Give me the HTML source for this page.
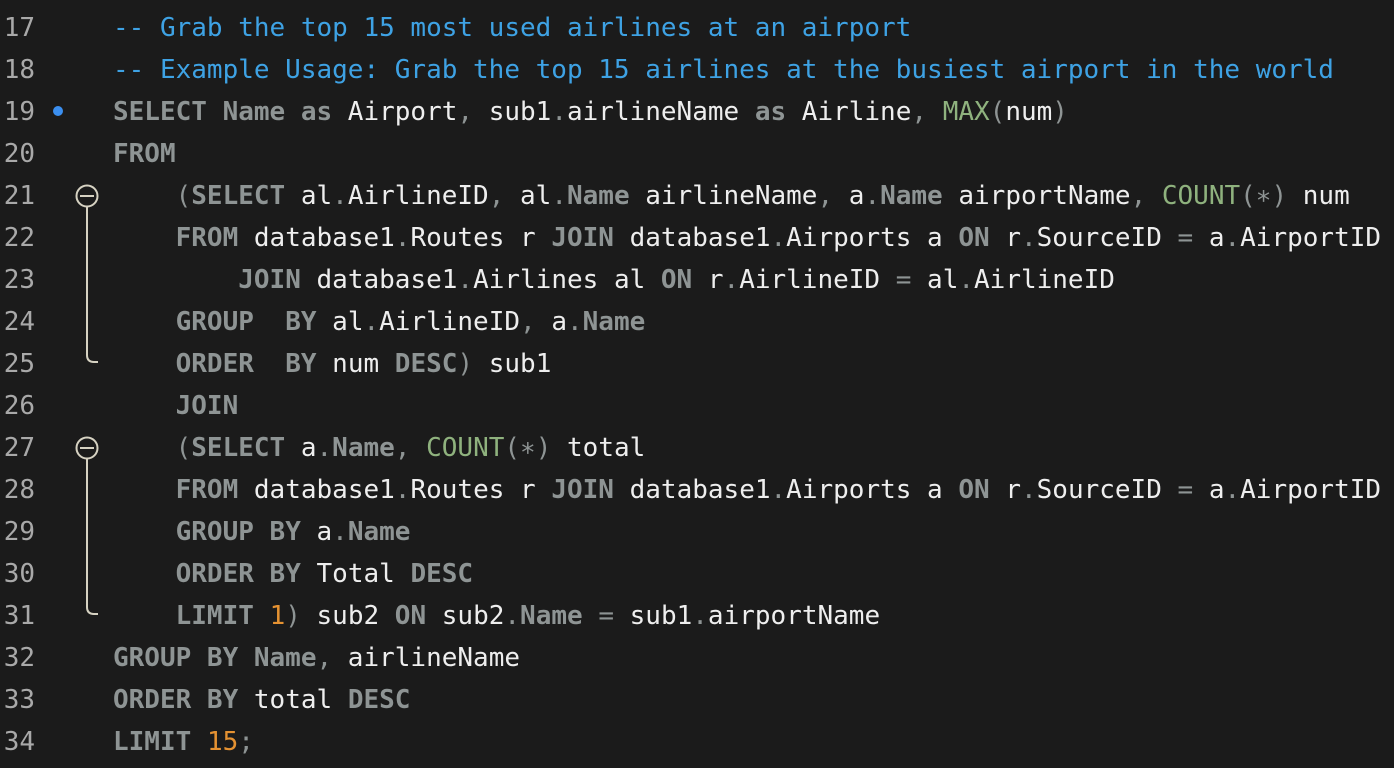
<!DOCTYPE html>
<html><head><meta charset="utf-8"><style>
html,body{margin:0;padding:0;background:#1b1b1b;width:1394px;height:768px;overflow:hidden}
.wrap{position:relative;width:1394px;height:768px}
.nums,.code{position:absolute;top:7px;margin:0;font-family:"DejaVu Sans Mono","Liberation Mono",monospace;font-size:26px;line-height:42px;white-space:pre}
.nums{left:0;width:35px;text-align:right;color:#a9a9a9}
.code{left:113px;color:#eeeeee}
.k{color:#8e9494;font-weight:bold}
.p{color:#8e9494}
.c{color:#3ea2e4}
.n{color:#e59232}
.f{color:#8fb27e}
</style></head><body><div class="wrap">
<pre class="nums">17
18
19
20
21
22
23
24
25
26
27
28
29
30
31
32
33
34</pre>
<svg style="position:absolute;left:0;top:0" width="120" height="768">
<circle cx="58" cy="111" r="5" fill="#3b8ff0"/>
<g fill="none" stroke="#d6d2c2" stroke-width="2">
<circle cx="87" cy="196" r="10.5"/><line x1="80" y1="196" x2="94" y2="196"/>
<path d="M87 206.5 V355 Q87 362 94 362 H98"/>
<circle cx="87" cy="448" r="10.5"/><line x1="80" y1="448" x2="94" y2="448"/>
<path d="M87 458.5 V607 Q87 614 94 614 H98"/>
</g></svg>
<pre class="code"><span class="c">-- Grab the top 15 most used airlines at an airport</span>
<span class="c">-- Example Usage: Grab the top 15 airlines at the busiest airport in the world</span>
<span class="k">SELECT Name as</span> Airport<span class="p">,</span> sub1<span class="p">.</span>airlineName <span class="k">as</span> Airline<span class="p">,</span> <span class="f">MAX</span><span class="p">(</span>num<span class="p">)</span>
<span class="k">FROM</span>
    <span class="p">(</span><span class="k">SELECT</span> al<span class="p">.</span>AirlineID<span class="p">,</span> al<span class="p">.</span><span class="k">Name</span> airlineName<span class="p">,</span> a<span class="p">.</span><span class="k">Name</span> airportName<span class="p">,</span> <span class="f">COUNT</span><span class="p">(∗)</span> num
    <span class="k">FROM</span> database1<span class="p">.</span>Routes r <span class="k">JOIN</span> database1<span class="p">.</span>Airports a <span class="k">ON</span> r<span class="p">.</span>SourceID <span class="p">=</span> a<span class="p">.</span>AirportID
        <span class="k">JOIN</span> database1<span class="p">.</span>Airlines al <span class="k">ON</span> r<span class="p">.</span>AirlineID <span class="p">=</span> al<span class="p">.</span>AirlineID
    <span class="k">GROUP  BY</span> al<span class="p">.</span>AirlineID<span class="p">,</span> a<span class="p">.</span><span class="k">Name</span>
    <span class="k">ORDER  BY</span> num <span class="k">DESC</span><span class="p">)</span> sub1
    <span class="k">JOIN</span>
    <span class="p">(</span><span class="k">SELECT</span> a<span class="p">.</span><span class="k">Name</span><span class="p">,</span> <span class="f">COUNT</span><span class="p">(∗)</span> total
    <span class="k">FROM</span> database1<span class="p">.</span>Routes r <span class="k">JOIN</span> database1<span class="p">.</span>Airports a <span class="k">ON</span> r<span class="p">.</span>SourceID <span class="p">=</span> a<span class="p">.</span>AirportID
    <span class="k">GROUP BY</span> a<span class="p">.</span><span class="k">Name</span>
    <span class="k">ORDER BY</span> Total <span class="k">DESC</span>
    <span class="k">LIMIT</span> <span class="n">1</span><span class="p">)</span> sub2 <span class="k">ON</span> sub2<span class="p">.</span><span class="k">Name</span> <span class="p">=</span> sub1<span class="p">.</span>airportName
<span class="k">GROUP BY Name</span><span class="p">,</span> airlineName
<span class="k">ORDER BY</span> total <span class="k">DESC</span>
<span class="k">LIMIT</span> <span class="n">15</span><span class="p">;</span></pre>
</div></body></html>
